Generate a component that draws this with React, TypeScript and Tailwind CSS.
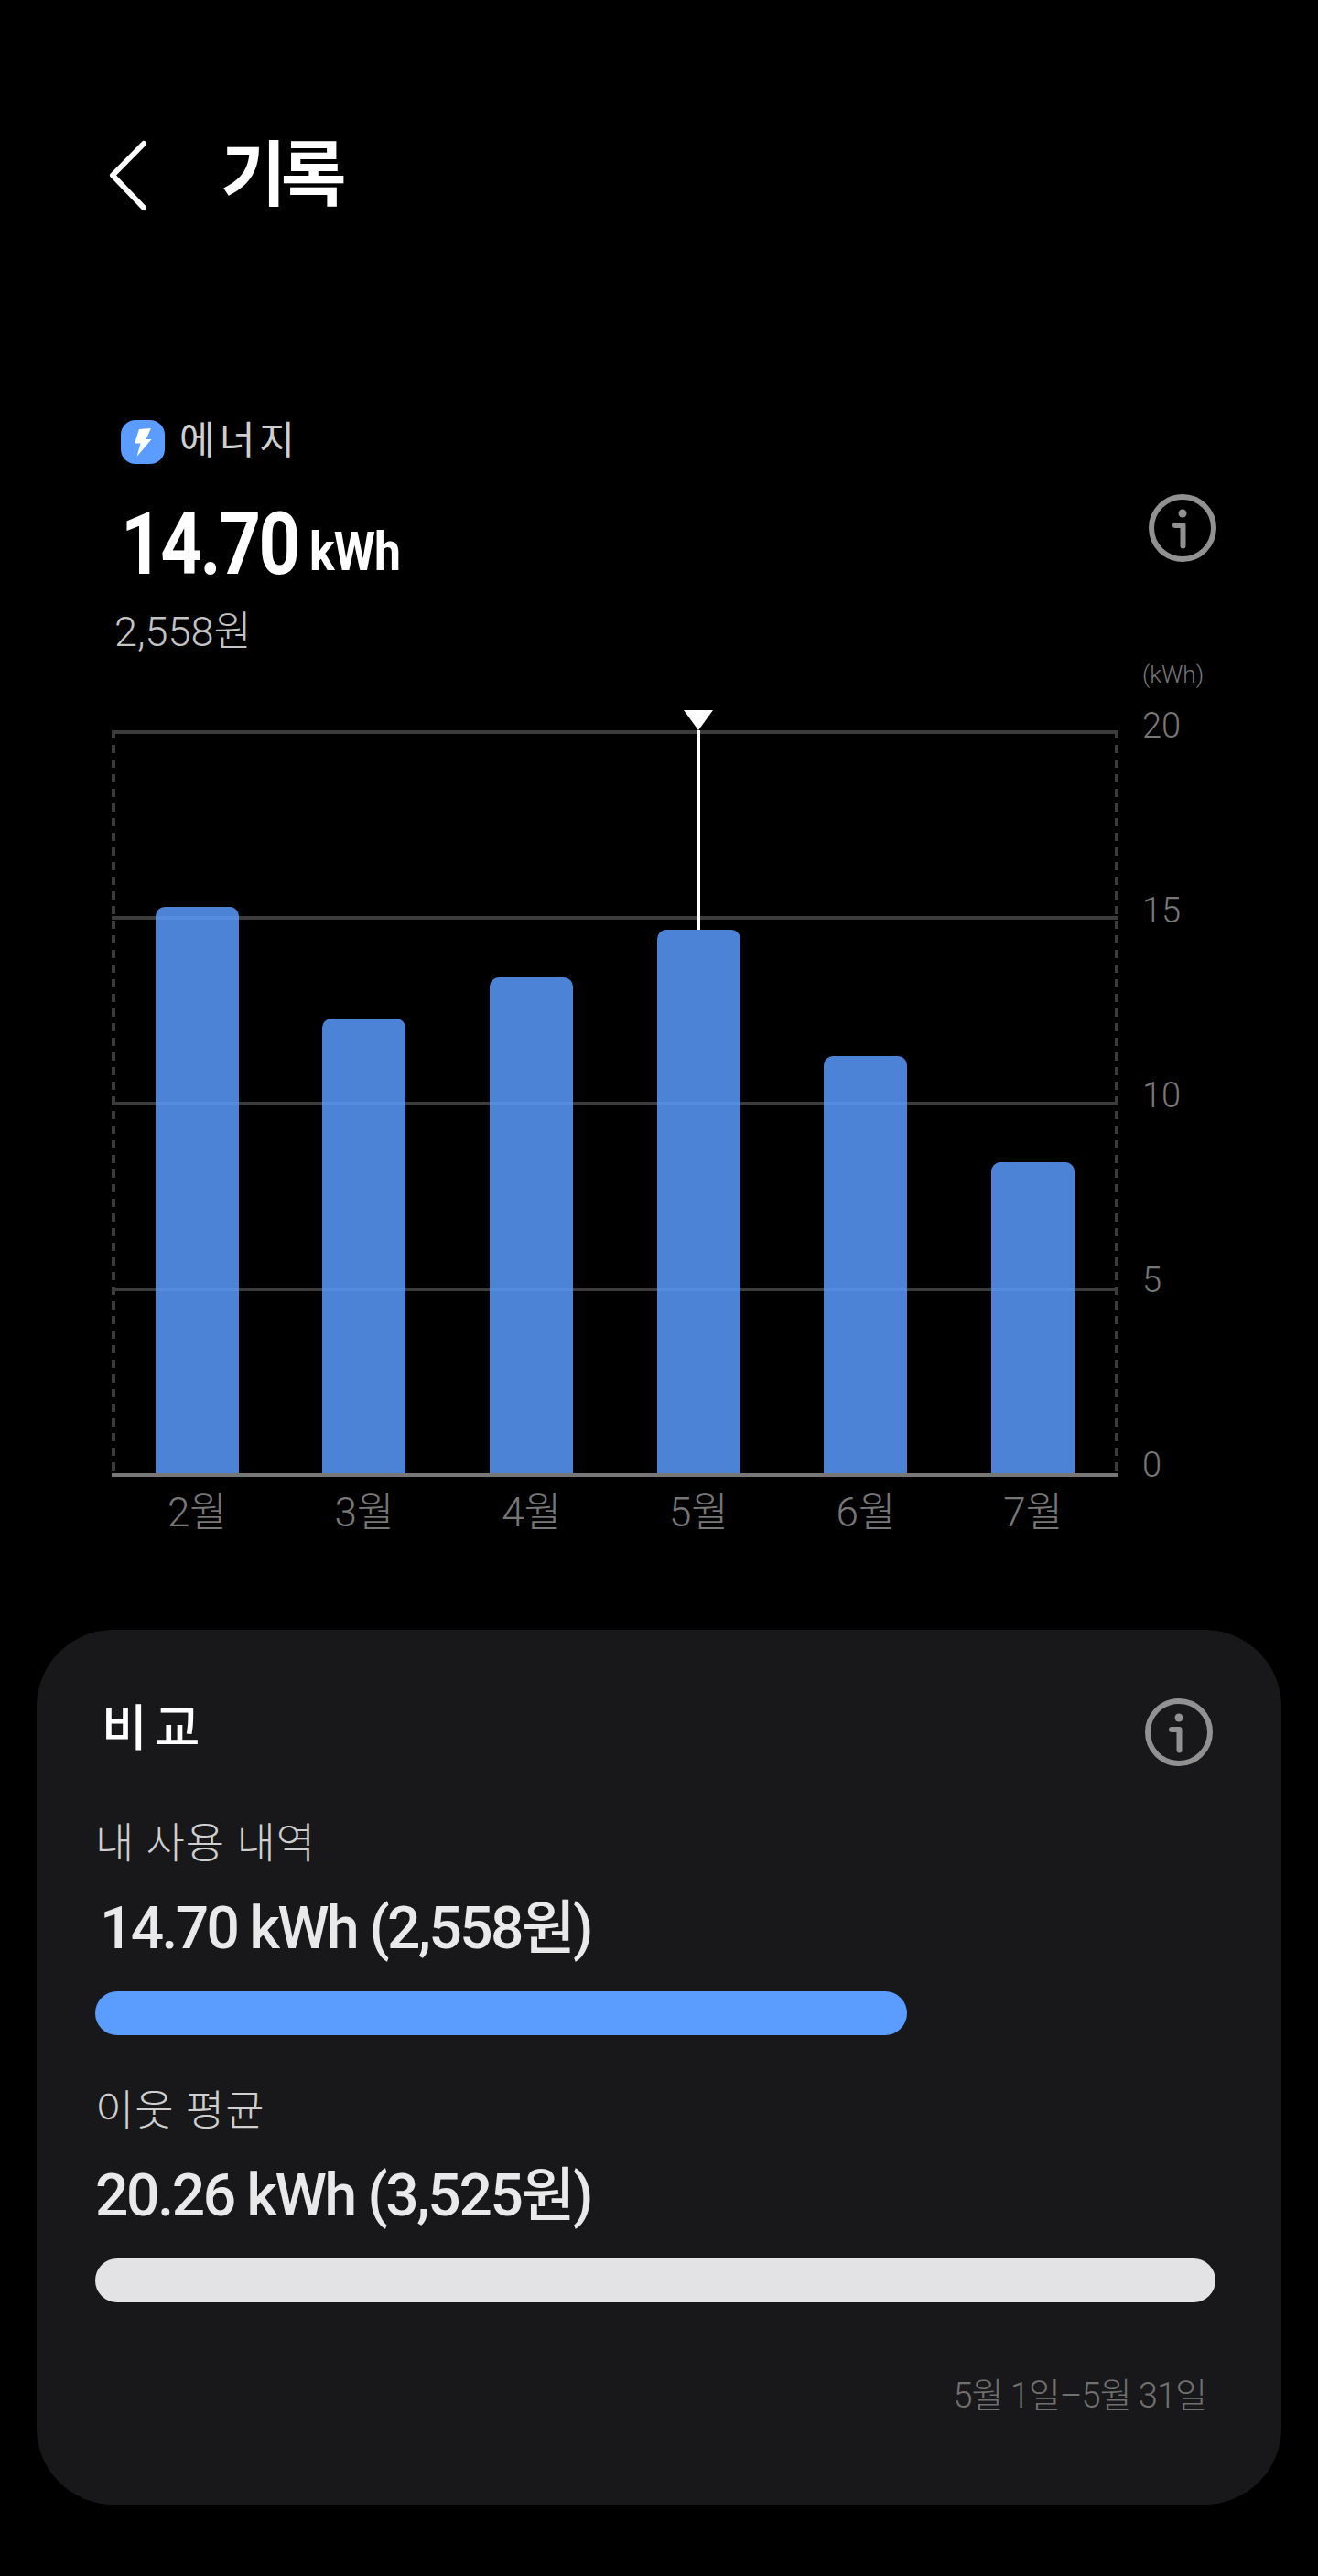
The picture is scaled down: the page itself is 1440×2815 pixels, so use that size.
import React from 'react'

const bars = [
  { month: '2월', height: 619 },
  { month: '3월', height: 497 },
  { month: '4월', height: 542 },
  { month: '5월', height: 594, selected: true },
  { month: '6월', height: 456 },
  { month: '7월', height: 340 },
]

const ticks = ['20', '15', '10', '5', '0']

const InfoIcon: React.FC<{ className?: string }> = ({ className }) => (
  <svg className={className} width="74" height="74" viewBox="0 0 74 74" fill="none">
    <circle cx="37" cy="37" r="34" stroke="#919191" strokeWidth="6" />
    <circle cx="37" cy="21" r="4.5" fill="#919191" />
    <path d="M29 34H37.500V56.500" stroke="#919191" strokeWidth="6" strokeLinecap="round" strokeLinejoin="round" />
  </svg>
)

const Usage: React.FC<{ label: string; value: string; width: string; color: string; valueClass: string }> = ({
  label,
  value,
  width,
  color,
  valueClass,
}) => (
  <div className="flex flex-col">
    <div className="h-[56px] text-[46px] leading-[56px] font-light tracking-[1px] text-[#cfcfcf]">{label}</div>
    <div className={`mt-[30px] h-[72px] text-[64px] leading-[72px] font-medium ${valueClass} text-[#e9e9e9]`}>{value}</div>
    <div className={`mt-[32px] h-[48px] rounded-full ${width} ${color}`} />
  </div>
)

export default function App() {
  return (
    <div className="w-[1440px] h-[2815px] overflow-hidden bg-black font-['Roboto','Noto_Sans_CJK_KR',sans-serif] text-white">
      <header className="pl-[119px] pt-[149px] flex items-center h-[237px]">
        <svg className="-mt-[3px]" width="42" height="78" viewBox="0 0 42 78" fill="none">
          <path d="M38 4L4 38.500L38 74" stroke="#fff" strokeWidth="6" strokeLinecap="round" strokeLinejoin="round" />
        </svg>
        <h1 className="ml-[80px] text-[78px] leading-[84px] font-bold tracking-[-6px]">기록</h1>
      </header>

      <section className="mt-[222px] pl-[132px] pr-[111px]">
        <div className="flex items-center h-[48px]">
          <div className="w-[48px] h-[48px] rounded-[16px] bg-[#5a9cff] flex items-center justify-center">
            <svg width="19" height="31" viewBox="0 0 19 31" fill="#fff">
              <path d="M5 1L18 0L12.500 12H18.500L2.500 31L6.500 16.500H0Z" />
            </svg>
          </div>
          <span className="ml-[16px] -mt-[2px] text-[42px] leading-[48px] tracking-[5px] text-[#cfcfcf]">에너지</span>
        </div>
        <div className="relative mt-[42px] h-[92px] flex items-end">
          <span className="-mr-[34px] origin-left scale-x-[0.85] text-[94px] leading-[92px] font-bold tracking-[-3px]">14.70</span>
          <span className="ml-[12px] origin-left scale-x-[0.86] text-[60px] leading-[76px] font-bold tracking-[-1px]">kWh</span>
          <InfoIcon className="absolute right-0 -top-[9px]" />
        </div>
        <div className="-ml-[7px] mt-[22px] h-[56px] text-[45px] leading-[56px] font-light text-[#c4c4c4]">2,558원</div>
      </section>

      <section className="mt-[8px] pl-[122px] flex">
        <div className="relative w-[1100px] mt-[71px] h-[816px]">
          <div className="h-full flex flex-col justify-between">
            <div className="h-[4px] bg-[#3c3c3c]" />
            <div className="h-[4px] bg-[#3c3c3c]" />
            <div className="h-[4px] bg-[#3c3c3c]" />
            <div className="h-[4px] bg-[#3c3c3c]" />
            <div className="h-[4px] bg-[#777777]" />
          </div>
          <div className="absolute left-0 top-0 bottom-[4px] w-[4px] bg-[repeating-linear-gradient(to_bottom,#3c3c3c_0,#3c3c3c_9px,transparent_9px,transparent_16px)]" />
          <div className="absolute right-0 top-0 bottom-[4px] w-[4px] bg-[repeating-linear-gradient(to_bottom,#3c3c3c_0,#3c3c3c_9px,transparent_9px,transparent_16px)]" />
          <div className="absolute inset-x-0 bottom-[4px] px-[2px] grid grid-cols-6 items-end">
            {bars.map((bar) => (
              <div key={bar.month} className="relative flex justify-center">
                {bar.selected && (
                  <div className="absolute bottom-full flex flex-col items-center" style={{ height: 812 - bar.height + 22 }}>
                    <svg width="32" height="22" viewBox="0 0 32 22" fill="#fff">
                      <path d="M0 0H32L16 22Z" />
                    </svg>
                    <div className="w-[4px] flex-1 bg-white" />
                  </div>
                )}
                <div className="w-[91px] rounded-t-[10px] bg-[#5a9cff]/[0.84]" style={{ height: bar.height }} />
              </div>
            ))}
          </div>
          <div className="absolute top-full inset-x-0 mt-[11px] px-[2px] grid grid-cols-6">
            {bars.map((bar) => (
              <div key={bar.month} className="text-center text-[44px] leading-[56px] font-light text-[#777777]">
                {bar.month}
              </div>
            ))}
          </div>
        </div>
        <div className="ml-[26px] -mt-[7px] flex flex-col">
          <div className="h-[34px] text-[26px] leading-[34px] font-light text-[#777777]">(kWh)</div>
          <div className="mt-[18px] h-[850px] flex flex-col justify-between">
            {ticks.map((tick) => (
              <div key={tick} className="h-[42px] text-[38px] leading-[42px] font-light text-[#777777]">
                {tick}
              </div>
            ))}
          </div>
        </div>
      </section>

      <section className="absolute left-[40px] top-[1781px] w-[1360px] h-[956px] rounded-[84px] bg-[#18181a] pl-[64px] pr-[72px]">
        <div className="relative pt-[81px] pl-[7px] h-[205px]">
          <h2 className="text-[54px] leading-[56px] font-medium tracking-[8px]">비교</h2>
          <InfoIcon className="absolute right-[3px] top-[75px]" />
        </div>
        <Usage label="내 사용 내역" value="14.70 kWh (2,558원)" width="w-[887px]" color="bg-[#5a9cff]" valueClass="pl-[5px] tracking-[-2.6px]" />
        <div className="mt-[54px]">
          <Usage label="이웃 평균" value="20.26 kWh (3,525원)" width="w-full" color="bg-[#e3e3e5]" valueClass="tracking-[-2.3px]" />
        </div>
        <div className="mt-[77px] pr-[10px] text-right text-[38px] leading-[50px] font-light tracking-[-1px] text-[#707070]">5월 1일–5월 31일</div>
      </section>
    </div>
  )
}
